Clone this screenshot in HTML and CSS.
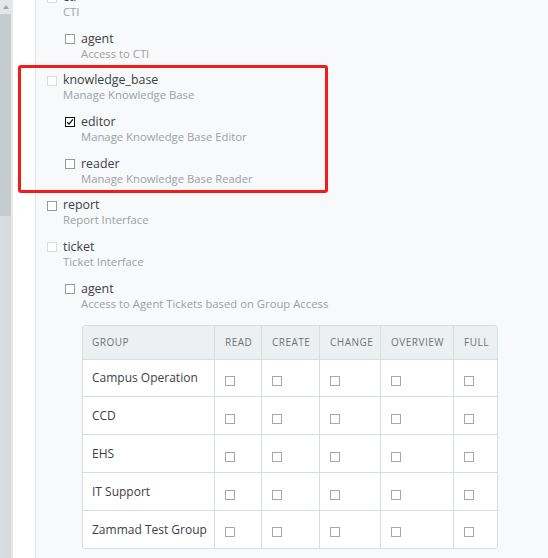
FILE: index.html
```html
<!DOCTYPE html>
<html>
<head>
<meta charset="utf-8">
<link rel="stylesheet" href="styles.css">
</head>
<body>
<div class="app">
  <div class="scrollbar">
    <div class="sb-btn"><span class="sb-arrow"></span></div>
    <div class="sb-thumb"></div>
    <div class="sb-track"></div>
  </div>
  <div class="gutter"></div>
  <main class="content">
    <ul class="perms level1">
      <li class="perm">
        <div class="row"><span class="cb light"></span><div class="txt"><div class="name">cti</div><div class="desc">CTI</div></div></div>
        <ul class="perms level2">
          <li class="perm">
            <div class="row"><span class="cb"></span><div class="txt"><div class="name">agent</div><div class="desc">Access to CTI</div></div></div>
          </li>
        </ul>
      </li>
      <li class="perm">
        <div class="row"><span class="cb light"></span><div class="txt"><div class="name">knowledge_base</div><div class="desc">Manage Knowledge Base</div></div></div>
        <ul class="perms level2">
          <li class="perm">
            <div class="row"><span class="cb checked"><svg viewBox="0 0 10 10" width="8" height="8"><path d="M1.3 5.2 L3.8 7.6 L8.6 1.6" fill="none" stroke="#111" stroke-width="1.6"/></svg></span><div class="txt"><div class="name">editor</div><div class="desc">Manage Knowledge Base Editor</div></div></div>
          </li>
          <li class="perm">
            <div class="row"><span class="cb"></span><div class="txt"><div class="name">reader</div><div class="desc">Manage Knowledge Base Reader</div></div></div>
          </li>
        </ul>
      </li>
      <li class="perm">
        <div class="row"><span class="cb"></span><div class="txt"><div class="name">report</div><div class="desc">Report Interface</div></div></div>
      </li>
      <li class="perm">
        <div class="row"><span class="cb light"></span><div class="txt"><div class="name">ticket</div><div class="desc">Ticket Interface</div></div></div>
        <ul class="perms level2">
          <li class="perm">
            <div class="row"><span class="cb"></span><div class="txt"><div class="name">agent</div><div class="desc">Access to Agent Tickets based on Group Access</div></div></div>
            <table class="groups">
              <thead>
                <tr><th class="c-group">Group</th><th class="c-read">Read</th><th class="c-create">Create</th><th class="c-change">Change</th><th class="c-overview">Overview</th><th class="c-full">Full</th></tr>
              </thead>
              <tbody>
                <tr><td>Campus Operation</td><td><span class="cb t"></span></td><td><span class="cb t"></span></td><td><span class="cb t"></span></td><td><span class="cb t"></span></td><td><span class="cb t"></span></td></tr>
                <tr><td>CCD</td><td><span class="cb t"></span></td><td><span class="cb t"></span></td><td><span class="cb t"></span></td><td><span class="cb t"></span></td><td><span class="cb t"></span></td></tr>
                <tr><td>EHS</td><td><span class="cb t"></span></td><td><span class="cb t"></span></td><td><span class="cb t"></span></td><td><span class="cb t"></span></td><td><span class="cb t"></span></td></tr>
                <tr><td>IT Support</td><td><span class="cb t"></span></td><td><span class="cb t"></span></td><td><span class="cb t"></span></td><td><span class="cb t"></span></td><td><span class="cb t"></span></td></tr>
                <tr><td>Zammad Test Group</td><td><span class="cb t"></span></td><td><span class="cb t"></span></td><td><span class="cb t"></span></td><td><span class="cb t"></span></td><td><span class="cb t"></span></td></tr>
              </tbody>
            </table>
          </li>
        </ul>
      </li>
    </ul>
  </main>
  <div class="highlight"></div>
</div>
</body>
</html>
```

FILE: styles.css
```css
* { box-sizing: border-box; }
html, body { margin: 0; padding: 0; height: 100%; overflow: hidden; }
body {
  font-family: "Open Sans", "Noto Sans", sans-serif;
  background: #f7f9fb;
  color: #3e4246;
}
.app {
  position: relative;
  display: flex;
  height: 558px;
}
.scrollbar {
  width: 13px;
  display: flex;
  flex-direction: column;
  background: #dcdfe1;
  border-right: 2px solid #e6e9eb;
}
.sb-btn {
  height: 14px;
  display: flex;
  justify-content: center;
  align-items: center;
  background: #e4e6e8;
}
.sb-arrow {
  width: 0; height: 0;
  border-left: 3.5px solid transparent;
  border-right: 3.5px solid transparent;
  border-bottom: 4px solid #9ea3a6;
}
.sb-thumb {
  height: 202px;
  background: #c6cbce;
}
.sb-track {
  flex: 1;
  background: linear-gradient(to right, #dadee0, #d6dadd);
}
.gutter {
  width: 23px;
  background: #fff;
  border-right: 1px solid #e2e5e7;
}
.content {
  flex: 1;
  padding-left: 11px;
}
.perms {
  list-style: none;
  margin: 0;
  padding: 0;
  display: flex;
  flex-direction: column;
  gap: 12.67px;
}
.level1 { margin-top: -10px; }
.level2 { margin: 12.67px 0 0 18px; }
.row {
  display: flex;
  align-items: flex-start;
  gap: 6px;
}
.txt { display: flex; flex-direction: column; }
.name {
  font-size: 12.4px;
  line-height: 14px;
  color: #3d4145;
}
.desc {
  font-size: 11.3px;
  line-height: 15px;
  color: #9ba1a6;
}
.cb {
  display: inline-flex;
  align-items: center;
  justify-content: center;
  width: 10px;
  height: 10px;
  flex: none;
  border: 1px solid #9a9a9a;
  background: #fff;
  margin-top: 2.5px;
}
.cb.light { border-color: #dadcdd; }
.cb.checked { border-color: #111; }
.cb.t { border-color: #a7a7a7; margin-top: 0; vertical-align: middle; }

.groups {
  margin: 14px 0 0 17px;
  border-collapse: separate;
  border-spacing: 0;
  border: 1px solid #d5dee2;
  border-radius: 3px;
  background: #fff;
  font-size: 12px;
}
.groups th, .groups td {
  border-left: 1px solid #d5dee2;
  border-top: 1px solid #d5dee2;
  padding: 0 0 0 9px;
  text-align: left;
}
.groups th:first-child, .groups td:first-child { border-left: none; }
.groups thead th { border-top: none; }
.groups th {
  background: #edf0f1;
  height: 33px;
  font-size: 10px;
  font-weight: 400;
  letter-spacing: 0.5px;
  text-transform: uppercase;
  color: #6c7378;
}
.groups thead th:first-child { border-top-left-radius: 3px; }
.groups thead th:last-child { border-top-right-radius: 3px; }
.groups td {
  height: 37.8px;
  color: #3d4145;
}
.groups td .cb { margin-top: 4px; }
.groups th:not(:first-child), .groups td:not(:first-child) { padding-left: 10px; }
.c-group { width: 131px; }
.c-read { width: 47px; }
.c-create { width: 58px; }
.c-change { width: 61px; }
.c-overview { width: 73px; }
.c-full { width: 44px; }

.highlight {
  position: absolute;
  left: 18px;
  top: 65px;
  width: 310px;
  height: 128px;
  border: 3px solid #f41b1b;
  border-radius: 3px;
  pointer-events: none;
}
```
